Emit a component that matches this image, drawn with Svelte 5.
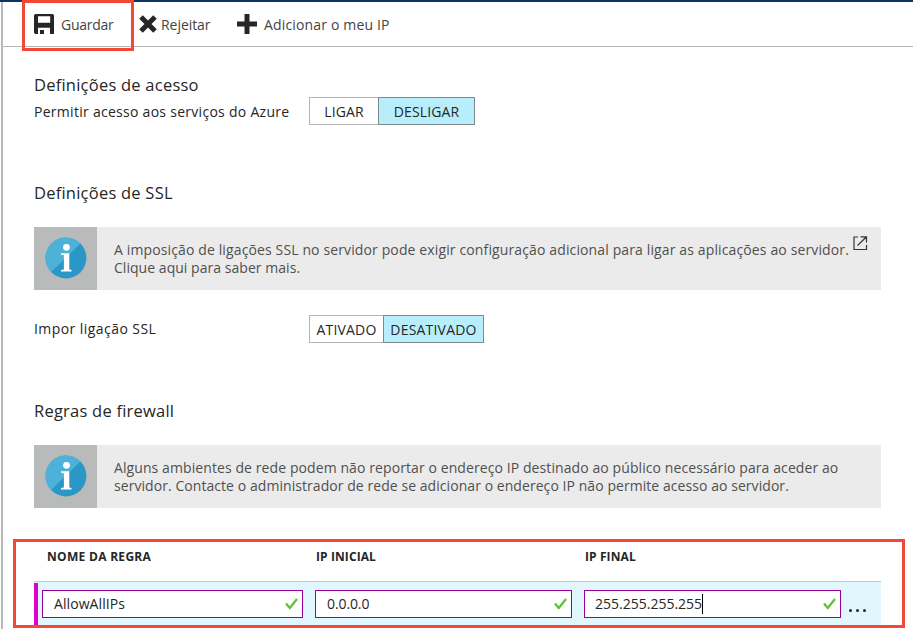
<script>
  const columns = [
    { title: 'NOME DA REGRA', value: 'AllowAllIPs', key: 'name' },
    { title: 'IP INICIAL', value: '0.0.0.0', key: 'start' },
    { title: 'IP FINAL', value: '255.255.255.255', key: 'end' }
  ];
</script>

{#snippet info()}
  <div class="info-icon">
    <svg width="42" height="42" viewBox="0 0 42 42">
      <circle cx="21" cy="21" r="20.4" fill="#2b97c6" />
      <path d="M6.1 35 A20.4 20.4 0 0 1 35.4 6.6 Z" fill="#4db1d8" />
      <circle cx="21.5" cy="10.3" r="3.4" fill="#fff" />
      <path d="M16 16.3h8.3v16.2l2.2.5v1.6H16V33l2.9-.5V18.2l-2.9-.5z" fill="#fff" />
    </svg>
  </div>
{/snippet}

<div class="blade">
  <header>
    <button class="save">
      <svg width="20" height="20" viewBox="0 0 20 20">
        <path fill-rule="evenodd" fill="#262626" d="M1.2 0H18.8L20 1.2V20H16V13.8H4V20H1.2L0 18.8V1.2ZM4 2.2V8.8H16.2V2.2Z" />
        <path fill="#262626" d="M6 16h4v4H6z" />
      </svg>
      <span class="t-save">Guardar</span>
    </button>
    <button class="discard">
      <svg width="18" height="18" viewBox="0 0 18 18"><path d="M2 2L16 16M16 2L2 16" stroke="#262626" stroke-width="5" /></svg>
      <span class="t-discard">Rejeitar</span>
    </button>
    <button class="add">
      <svg width="20" height="20" viewBox="0 0 20 20"><path d="M10 0V20M0 10H20" stroke="#262626" stroke-width="5" /></svg>
      <span class="t-add">Adicionar o meu IP</span>
    </button>
    <div class="mark save-mark"></div>
  </header>

  <main>
    <h2 class="h-access"><span>Definições de acesso</span></h2>
    <div class="setting access">
      <span class="label t-allow">Permitir acesso aos serviços do Azure</span>
      <div class="toggle azure"><span class="off"><i>LIGAR</i></span><span class="on"><i>DESLIGAR</i></span></div>
    </div>

    <h2 class="h-ssl"><span>Definições de SSL</span></h2>
    <section class="notice">
      {@render info()}
      <p><span class="n1">A imposição de ligações SSL no servidor pode exigir configuração adicional para ligar as aplicações ao servidor.</span><br /><span class="n2">Clique aqui para saber mais.</span></p>
      <svg class="external" width="15" height="15" viewBox="0 0 15 15" fill="none" stroke="#333" stroke-width="1.2"><path d="M5 1H1V13.5H13.5V9M7.5 .8H13.5V6.5M13.3 1L4.5 9.5" /></svg>
    </section>
    <div class="setting ssl">
      <span class="label t-ssl">Impor ligação SSL</span>
      <div class="toggle enforce"><span class="off"><i>ATIVADO</i></span><span class="on"><i>DESATIVADO</i></span></div>
    </div>

    <h2 class="h-fire"><span>Regras de firewall</span></h2>
    <section class="notice">
      {@render info()}
      <p><span class="n3">Alguns ambientes de rede podem não reportar o endereço IP destinado ao público necessário para aceder ao</span><br /><span class="n4">servidor. Contacte o administrador de rede se adicionar o endereço IP não permite acesso ao servidor.</span></p>
    </section>

    <div class="rules">
      <div class="titles">
        {#each columns as c}<b class={c.key}><span>{c.title}</span></b>{/each}
      </div>
      <div class="row">
        {#each columns as c}
          <div class="field {c.key}">
            <span class="value">{c.value}</span>{#if c.key === 'end'}<span class="caret"></span>{/if}
            <svg width="13" height="12" viewBox="0 0 13 12"><path d="M1 5.5L4.8 10L12 1" fill="none" stroke="#5fc234" stroke-width="2.3" /></svg>
          </div>
        {/each}
        <div class="more"><u></u><u></u><u></u></div>
      </div>
      <div class="mark rules-mark"></div>
    </div>
  </main>
</div>

<style>
  :global(body) { background: #fff; overflow: hidden; }
  .blade {
    position: relative;
    box-sizing: border-box;
    height: 629px;
    padding-top: 2px;
    background: linear-gradient(#0b3367, #0b3367) 0 0 / 100% 2px no-repeat;
    font: 14px/18px "Open Sans", "Noto Sans", sans-serif;
    color: #262626;
    overflow: hidden;
  }
  .blade::before {
    content: "";
    position: absolute;
    left: 1px; top: 2px; bottom: 0;
    width: 2px;
    background: #b8b9ba;
  }
  span, i, b, p { white-space: nowrap; }
  svg { flex: none; }
  header {
    position: relative;
    display: flex;
    align-items: center;
    height: 44px;
    margin-left: 3px;
    border-bottom: 1px solid #b7b7b7;
  }
  button {
    display: flex;
    align-items: center;
    box-sizing: border-box;
    padding: 0;
    border: 0;
    background: none;
    font: inherit;
    color: #444;
    height: 44px;
  }
  button span { padding-top: 1px; }
  .save { width: 136px; padding-left: 31px; gap: 7px; letter-spacing: -.25px; }
  .discard { width: 98px; gap: 4px; letter-spacing: -.05px; }
  .add { gap: 7px; letter-spacing: .16px; }
  .mark { position: absolute; border: 3px solid #f04937; box-sizing: border-box; }
  .save-mark { left: 19px; top: -2px; width: 112px; height: 51px; z-index: 2; }
  main { padding: 27px 32px 0 34px; display: flex; flex-direction: column; }
  h2 { margin: 0; font: 400 16.5px/22px "Open Sans", "Noto Sans", sans-serif; height: 22px; letter-spacing: .23px; }
  .setting { display: flex; align-items: center; height: 28px; }
  .setting .label { width: 275px; }
  .t-allow { letter-spacing: .28px; padding-top: 2px; }
  .t-ssl { letter-spacing: .44px; }
  .access { margin-top: 1px; }
  .toggle { display: flex; }
  .toggle > span {
    display: flex; align-items: center; justify-content: center;
    box-sizing: border-box; height: 28px; border: 1px solid #b5b5b5;
  }
  .toggle .off { border-right: 0; }
  .toggle .on { background: #b8eefb; border-color: #7f8a8d; }
  i { font-style: normal; padding-top: 1px; }
  .azure .off { width: 69px; } .azure .on { width: 97px; }
  .azure i { letter-spacing: .1px; }
  .enforce i { letter-spacing: .2px; }
  .enforce .off { width: 74px; } .enforce .on { width: 101px; }
  .h-ssl { margin-top: 57px; }
  .notice { display: flex; height: 63px; margin-top: 23px; background: #ebebeb; color: #505050; }
  .info-icon { width: 63px; display: flex; align-items: center; justify-content: center; background: #b9bbba; }
  .info-icon svg { margin-top: -2px; }
  .notice p { margin: 14px 0 0 17px; width: 734px; }
  .n1 { letter-spacing: .127px; }
  .n2 { letter-spacing: .04px; }
  .n3 { letter-spacing: .09px; }
  .n4 { letter-spacing: .06px; }
  .external { margin: 9px 0 0 5px; }
  .ssl { margin-top: 25px; }
  .h-fire { margin-top: 57px; }
  .rules { position: relative; margin-top: 31px; }
  .titles { display: flex; height: 43px; box-sizing: border-box; padding: 9px 0 0 13px; font-size: 12px; border-bottom: 1px solid #c8cacb; }
  .titles b { width: 269px; letter-spacing: .1px; }
  .titles .name { letter-spacing: .3px; }
  .row { position: relative; display: flex; height: 43px; box-sizing: border-box; align-items: flex-start; gap: 12px; padding: 8px 0 0 8px; background: #e2f7fd; }
  .row::before { content: ""; position: absolute; left: 0; top: 1px; bottom: 0; width: 4px; background: #dc00d0; }
  .field { box-sizing: border-box; width: 257px; height: 28px; border: 1px solid #98009b; background: #fff; display: flex; align-items: center; padding: 0 4px 0 11px; }
  .field.name { width: 261px; }
  .field.end { padding-left: 10px; }
  .name .value { letter-spacing: .08px; }
  .start .value { letter-spacing: -.1px; }
  .field svg { margin-left: auto; }
  .caret { width: 1px; height: 20px; background: #000; margin-top: -1px; }
  .more { display: flex; gap: 4px; margin: 19px 0 0 -4px; }
  .more u { width: 3px; height: 3px; border-radius: 50%; background: #262626; }
  .rules-mark { left: -21px; top: 0; width: 892px; height: 89px; }
</style>
